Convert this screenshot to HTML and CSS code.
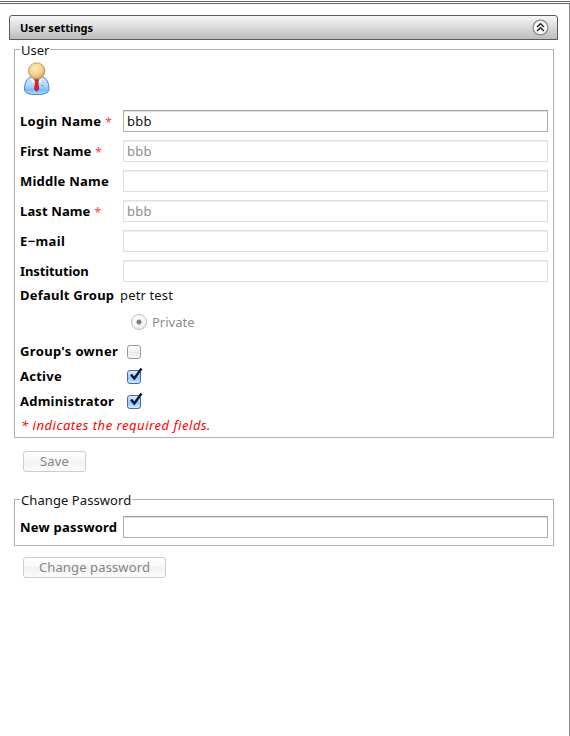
FILE: index.html
```
<!DOCTYPE html>
<html lang="en">
<head>
<meta charset="utf-8">
<title>User settings</title>
<link rel="stylesheet" href="styles.css">
</head>
<body>
<div class="topline"></div>
<main class="page">
  <header class="bar">
    <h1 class="title">User settings</h1>
    <svg class="collapse" width="17" height="17" viewBox="0 0 17 17"><circle cx="8.500" cy="8.500" r="7.400" fill="#fafafa" stroke="#8b8b8b" stroke-width="1.300"/><path d="M5 8L8.500 4.700L12 8M5 12L8.500 8.700L12 12" fill="none" stroke="#222" stroke-width="1.500"/></svg>
  </header>

  <fieldset class="box user">
    <legend class="legend t-user"><span class="legend-text">User</span></legend>
    <svg class="avatar" width="28" height="34" viewBox="0 0 28 34">
      <defs>
        <radialGradient id="head" cx=".42" cy=".35" r=".7"><stop offset="0" stop-color="#ffebb5"/><stop offset=".6" stop-color="#f2d090"/><stop offset="1" stop-color="#c89048"/></radialGradient>
        <linearGradient id="body" x1="0" y1="0" x2="0" y2="1"><stop offset="0" stop-color="#d4e6fa"/><stop offset=".5" stop-color="#b4d8fc"/><stop offset=".75" stop-color="#78b8f8"/><stop offset="1" stop-color="#aee6ff"/></linearGradient>
      </defs>
      <path d="M8 14.800C4 16 1.500 21 1.500 27C1.500 31 5 32.500 13.500 32.500S26 31 26 27C26 21 23.500 16 19.500 14.800Z" fill="url(#body)" stroke="#3f83dc" stroke-width="1"/>
      <path d="M7.500 15.500L13.500 20L19.500 15.500L17.500 21L13.500 17.500L9.500 21Z" fill="#eef6ff"/>
      <path d="M11.300 17H16L15 20L16 27L13.700 29.500L11.300 27L12.500 20Z" fill="#dc202b" stroke="#a81420" stroke-width=".5"/>
      <circle cx="13.700" cy="9" r="8.200" fill="url(#head)" stroke="#b98c52" stroke-width=".8"/>
      <path d="M18.500 23.500H20.500" stroke="#4aa878" stroke-width="1"/>
    </svg>
    <div class="row"><label class="label"><span class="t-login">Login Name</span><b class="req">*</b></label><div class="input active">bbb</div></div>
    <div class="row"><label class="label"><span class="t-first">First Name</span><b class="req">*</b></label><div class="input">bbb</div></div>
    <div class="row"><label class="label"><span class="t-middle">Middle Name</span></label><div class="input"></div></div>
    <div class="row"><label class="label"><span class="t-last">Last Name</span><b class="req">*</b></label><div class="input">bbb</div></div>
    <div class="row"><label class="label"><span class="t-email">E−mail</span></label><div class="input"></div></div>
    <div class="row"><label class="label"><span class="t-inst">Institution</span></label><div class="input"></div></div>
    <div class="group"><span class="bold t-group">Default Group</span><span class="t-petr">petr test</span></div>
    <div class="radio-row"><span class="radio"></span><span class="t-private">Private</span></div>
    <div class="check-row"><label class="check-label t-owner">Group's owner</label><span class="check"></span></div>
    <div class="check-row"><label class="check-label t-active">Active</label><span class="check on"><svg class="tick" width="16" height="18" viewBox="0 0 16 18"><path d="M3 8.500L6.300 12.500L13.500 2.500" fill="none" stroke="#061a3c" stroke-width="2.400"/></svg></span></div>
    <div class="check-row"><label class="check-label t-admin">Administrator</label><span class="check on"><svg class="tick" width="16" height="18" viewBox="0 0 16 18"><path d="M3 8.500L6.300 12.500L13.500 2.500" fill="none" stroke="#061a3c" stroke-width="2.400"/></svg></span></div>
    <p class="note t-note">* indicates the required fields.</p>
  </fieldset>
  <div class="button save"><span class="t-save">Save</span></div>

  <fieldset class="box password">
    <legend class="legend t-cp"><span class="legend-text">Change Password</span></legend>
    <div class="row"><label class="label"><span class="t-new">New password</span></label><div class="input active"></div></div>
  </fieldset>
  <div class="button change"><span class="t-change">Change password</span></div>
</main>
</body>
</html>
```
FILE: styles.css
```
* { box-sizing: border-box; }
body { margin: 0; background: #fff; color: #111; font: 13px/15px "Noto Sans", "Liberation Sans", sans-serif; }
.topline { height: 4px; border-bottom: 1px solid #666; background: linear-gradient(#fff 1px, #666 1px, #666 2px, #fff 2px); }
.page { height: 732px; padding: 11px 11px 0 9px; border-right: 1px solid #8c8c8c; }
.bar { display: flex; align-items: center; justify-content: space-between; height: 25px; padding: 0 8px 0 10px; border: 1px solid #5c5c5c; border-radius: 3px 3px 0 0; background: linear-gradient(#f7f7f7, #bdbdbd); }
.title { margin: 0; padding-bottom: 1px; color: #000; font-size: 11px; line-height: 15px; font-weight: 700; letter-spacing: .03px; }
.collapse { display: block; }
.box { min-width: 0; margin: 0 4px 0 5px; border: 1px solid #b0b0b0; }
.user { height: 396px; margin-top: 2px; padding: 0 5px; }
.legend { padding: 0 1px; height: 15px; }
.legend-text { display: block; padding-top: 1px; }
.avatar { display: block; margin: 5px 0 10px 3px; }
.row { display: flex; align-items: center; height: 30px; }
.label { width: 103px; flex: none; color: #000; font-weight: 700; white-space: nowrap; }
.req { margin-left: 4px; color: #ff4040; font-size: 12px; font-weight: 400; vertical-align: -1px; line-height: 12px; }
.input { flex: 1; height: 22px; padding: 3px; border: 1px solid #dedede; background: #fff; box-shadow: inset 0 1px 1px #eee; color: #8c8c8c; letter-spacing: .2px; }
.active { border-color: #a0a0a0 #b0b0b0 #b0b0b0; box-shadow: inset 0 1px 1px #ddd; color: #111; }
.bold { color: #000; font-weight: 700; }
.group { display: flex; height: 20px; padding-bottom: 2px; align-items: center; white-space: nowrap; }
.group .bold { width: 100px; }
.radio-row { display: flex; align-items: center; gap: 5px; height: 32px; padding-left: 111px; color: #8c8c8c; margin-bottom: 1px; }
.radio { width: 16px; height: 16px; border: 1px solid #bdbdbd; border-radius: 50%; background: radial-gradient(circle, #808080 2px, transparent 3px), linear-gradient(#fff, #eee); }
.check-row { display: flex; align-items: center; height: 25px; }
.check-label { width: 107px; color: #000; font-weight: 700; white-space: nowrap; }
.check { position: relative; width: 14px; height: 14px; border: 1px solid #999; border-radius: 3px; background: linear-gradient(#fff, #f0f0f0 50%, #e9e9e9 50%, #fafafa); }
.on { border-color: #5866a0; background: linear-gradient(#dcebfb, #a3cdf7 50%, #8ec2f5 50%, #c8edff); }
.tick { position: absolute; left: 0; top: -5px; }
.note { margin: 4px 0 0 1px; color: #f00; font-style: italic; white-space: nowrap; }
.button { display: flex; align-items: center; justify-content: center; height: 21px; margin-left: 14px; border: 1px solid #cdcdcd; border-radius: 3px; background: linear-gradient(#fff, #f6f6f6 50%, #f1f1f1 50%, #fcfcfc); color: #858585; }
.save { width: 63px; margin-top: 13px; }
.password { height: 54px; margin-top: 20px; padding: 5px 5px 0; }
.change { width: 143px; margin-top: 11px; }
.t-login { letter-spacing: .32px; }
.t-middle { letter-spacing: .23px; }
.t-last { letter-spacing: .12px; }
.t-email { letter-spacing: .35px; }
.t-inst { letter-spacing: -.1px; }
.t-group { letter-spacing: .24px; }
.t-petr { letter-spacing: .15px; }
.t-owner { letter-spacing: .35px; }
.t-active { letter-spacing: .25px; }
.t-admin { letter-spacing: .22px; }
.t-note { letter-spacing: .53px; }
.t-save { letter-spacing: .1px; }
.t-cp { letter-spacing: .08px; }
.t-new { letter-spacing: .22px; }
.t-change { letter-spacing: .13px; }
```
